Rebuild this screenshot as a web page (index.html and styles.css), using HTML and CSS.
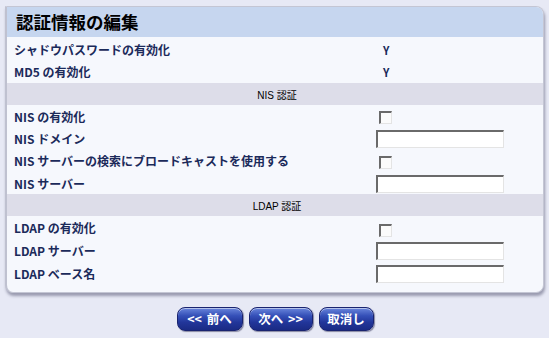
FILE: index.html
```html
<!DOCTYPE html>
<html lang="ja">
<head>
<meta charset="utf-8">
<title>認証情報の編集</title>
<link rel="stylesheet" href="styles.css">
</head>
<body>
<div class="panel">
  <div class="head"><h1>認証情報の編集</h1></div>
  <div class="grid">
    <div class="row"><span class="lbl">シャドウパスワードの有効化</span><span class="val">Y</span></div>
    <div class="row"><span class="lbl">MD5 の有効化</span><span class="val">Y</span></div>
    <div class="band">NIS 認証</div>
    <div class="row r23"><span class="lbl">NIS の有効化</span><span class="cell"><input type="checkbox" class="cb"></span></div>
    <div class="row r21"><span class="lbl">NIS ドメイン</span><span class="cell"><input type="text" class="tx"></span></div>
    <div class="row r24"><span class="lbl">NIS サーバーの検索にブロードキャストを使用する</span><span class="cell"><input type="checkbox" class="cb"></span></div>
    <div class="row r21"><span class="lbl">NIS サーバー</span><span class="cell"><input type="text" class="tx"></span></div>
    <div class="band">LDAP 認証</div>
    <div class="row r23"><span class="lbl">LDAP の有効化</span><span class="cell"><input type="checkbox" class="cb cb-low"></span></div>
    <div class="row r23"><span class="lbl">LDAP サーバー</span><span class="cell"><input type="text" class="tx"></span></div>
    <div class="row r23"><span class="lbl">LDAP ベース名</span><span class="cell"><input type="text" class="tx"></span></div>
  </div>
</div>
<div class="buttons">
  <button class="btn b-prev">&lt;&lt; 前へ</button>
  <button class="btn b-next">次へ &gt;&gt;</button>
  <button class="btn b-cancel">取消し</button>
</div>
</body>
</html>
```

FILE: styles.css
```css
html, body {
  margin: 0;
  padding: 0;
}
body {
  background: #e7e9f5;
  font-family: "Noto Sans CJK JP", "Noto Sans", sans-serif;
  width: 549px;
  height: 338px;
  overflow: hidden;
}
.panel {
  margin: 6px 6px 0 5px;
  width: 536px;
  background: #f6f8fd;
  border: 1px solid #c4c6d4;
  border-left: 2px solid #bfc1d0;
  border-radius: 0 8px 8px 8px;
  box-shadow: 1px 3px 3px rgba(60, 60, 90, 0.45);
  padding-bottom: 7px;
  overflow: hidden;
}
.head {
  height: 30px;
  background: #c6d6ef;
  display: flex;
  align-items: center;
  padding-left: 9px;
  margin-bottom: 2px;
}
h1 {
  margin: 0;
  font-size: 17.5px;
  font-weight: bold;
  color: #000;
  line-height: 1;
}
.grid {
  display: flex;
  flex-direction: column;
}
.row {
  display: grid;
  grid-template-columns: 362px 1fr;
  align-items: center;
  height: 22px;
  padding-left: 7px;
}
.r21 { height: 21px; }
.r23 { height: 23px; }
.r24 { height: 24px; }
.lbl {
  font-size: 12px;
  font-weight: bold;
  color: #1b2a5a;
  white-space: nowrap;
  line-height: 1;
}
.val {
  font-size: 11px;
  font-weight: bold;
  color: #1b2a5a;
  padding-left: 7px;
  line-height: 1;
}
.cell {
  display: flex;
  align-items: center;
}
.band {
  height: 22px;
  background: #dddde9;
  display: flex;
  align-items: center;
  justify-content: center;
  font-size: 10px;
  color: #000;
  font-family: "Liberation Sans", "Noto Sans CJK JP", sans-serif;
  padding-left: 4px;
}
.cb {
  appearance: none;
  -webkit-appearance: none;
  margin: 2px 0 0 3px;
  width: 13px;
  height: 13px;
  box-sizing: border-box;
  border-top: 2px solid #6a6a6a;
  border-left: 2px solid #6a6a6a;
  border-right: 1px solid #e4e4e4;
  border-bottom: 1px solid #e4e4e4;
  background: #fbfbfb;
}
.cb-low { margin-top: 5px; }
.tx {
  margin: 0;
  width: 128px;
  height: 18px;
  box-sizing: border-box;
  border-top: 2px solid #6a6a6a;
  border-left: 2px solid #6a6a6a;
  border-right: 1px solid #e4e4e4;
  border-bottom: 1px solid #e4e4e4;
  background: #ffffff;
  padding: 0;
}
.buttons {
  display: flex;
  justify-content: center;
  gap: 6px;
  margin-top: 14px;
  padding-left: 1px;
}
.btn {
  height: 24px;
  border: 1px solid #1a2470;
  border-radius: 8px;
  background: linear-gradient(#6a86dc 0%, #3550b8 35%, #22369a 65%, #1a2a84 100%);
  box-shadow: inset 0 1px 0 rgba(255, 255, 255, 0.5), 1px 1px 1px rgba(40, 40, 80, 0.5);
  color: #fff;
  font-family: "Noto Sans CJK JP", "Noto Sans", sans-serif;
  font-weight: bold;
  font-size: 12.5px;
  padding: 0;
  line-height: 1;
  word-spacing: 2px;
}
.b-prev { width: 66px; }
.b-next { width: 64px; }
.b-cancel { width: 55px; }
```
